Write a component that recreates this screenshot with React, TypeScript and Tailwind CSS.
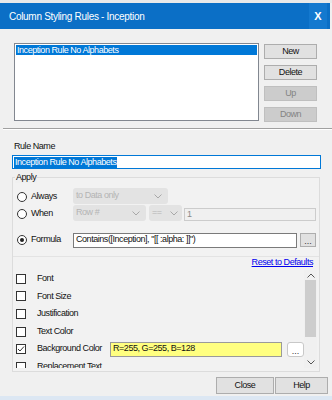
import React from 'react';

const font = { fontFamily: '"Liberation Sans", Arial, sans-serif' };

const Chevron = ({ className = '' }: { className?: string }) => (
  <svg width="8" height="5" viewBox="0 0 8 5" className={className}>
    <path d="M0.5 0.5 L4 4 L7.5 0.5" fill="none" stroke="currentColor" strokeWidth="1" />
  </svg>
);

const Radio = ({ checked = false }: { checked?: boolean }) => (
  <div className="w-[10px] h-[10px] rounded-full border border-[#333] bg-white flex items-center justify-center">
    {checked && <div className="w-[4px] h-[4px] rounded-full bg-[#222]" />}
  </div>
);

const Check = ({ checked = false }: { checked?: boolean }) => (
  <div className="w-[10px] h-[10px] border border-[#333] bg-white flex items-center justify-center">
    {checked && (
      <svg width="8" height="8" viewBox="0 0 8 8">
        <path d="M1 4 L3 6 L7 1.5" fill="none" stroke="#333" strokeWidth="1" />
      </svg>
    )}
  </div>
);

const WinButton = ({ label, disabled = false, className = '' }: { label: string; disabled?: boolean; className?: string }) => (
  <div
    className={`flex items-center justify-center border ${
      disabled ? 'bg-[#cccccc] border-[#bfbfbf] text-[#838383]' : 'bg-[#e1e1e1] border-[#adadad] text-[#111]'
    } ${className}`}
  >
    {label}
  </div>
);

const rows = [
  { label: 'Font' },
  { label: 'Font Size' },
  { label: 'Justification' },
  { label: 'Text Color' },
  { label: 'Background Color', checked: true, value: 'R=255, G=255, B=128' },
  { label: 'Replacement Text' },
];

export default function App() {
  return (
    <div style={font} className="w-[332px] h-[400px] bg-[#f0f0f0] text-[9px] tracking-[-0.45px] text-[#111] overflow-hidden flex flex-col">
      {/* Title bar */}
      <div className="h-[3px] bg-[#e9e9e9] shrink-0" />
      <div className="h-[26px] bg-[#0b6fc6] flex items-center justify-between pl-[9px] pr-[3px] shrink-0 mr-[2px]">
        <span className="text-white text-[10px] tracking-[-0.3px]">Column Styling Rules - Inception</span>
        <div className="w-[18px] h-[26px] bg-[#1479cf] flex items-center justify-center">
          <span className="text-white font-bold text-[11px] tracking-normal">X</span>
        </div>
      </div>

      {/* Rules list + buttons */}
      <div className="flex pl-[14px] pt-[14px] gap-[5px]">
        <div className="w-[245px] h-[78px] bg-white border border-[#828790] p-[1px]">
          <div className="h-[10px] bg-[#0078d7] text-white leading-[10px] pl-[1px]">Inception Rule No Alphabets</div>
        </div>
        <div className="flex flex-col gap-[6px] pt-[1px]">
          <WinButton label="New" className="w-[53px] h-[15px]" />
          <WinButton label="Delete" className="w-[53px] h-[15px]" />
          <WinButton label="Up" disabled className="w-[53px] h-[15px]" />
          <WinButton label="Down" disabled className="w-[53px] h-[15px]" />
        </div>
      </div>

      {/* Separator */}
      <div className="mt-[6px] ml-[3px] h-[1px] bg-[#a0a0a0]" />
      <div className="ml-[3px] h-[1px] bg-white" />

      {/* Rule name */}
      <div className="pl-[14px] pt-[10px] leading-[12px]">Rule Name</div>
      <div className="ml-[12px] mt-[3px] w-[309px] h-[14px] bg-white border border-[#0078d7] flex items-center px-[1px]">
        <span className="bg-[#0078d7] text-white leading-[11px] px-[1px]">Inception Rule No Alphabets</span>
      </div>

      {/* Apply group */}
      <div className="relative ml-[12px] mt-[8px] w-[308px] h-[195px] border border-[#dcdcdc] bg-[#f2f2f2] flex flex-col">
        <div className="absolute -top-[7px] left-[2px] px-[1px] bg-[#f0f0f0] leading-[12px]">Apply</div>

        <div className="flex flex-col pl-[4px] pt-[10px]">
          {/* Always */}
          <div className="flex items-start h-[17px]">
            <div className="w-[56px] flex items-center gap-[4px] pt-[2px]">
              <Radio />
              <span>Always</span>
            </div>
            <div className="w-[95px] h-[16px] rounded-[3px] bg-[#e3e3e3] text-[#b4b4b4] flex items-center justify-between px-[3px]">
              <span>to Data only</span>
              <Chevron className="text-[#a8a8a8] mr-[3px]" />
            </div>
          </div>
          {/* When */}
          <div className="flex items-start h-[17px]">
            <div className="w-[56px] flex items-center gap-[4px] pt-[2px]">
              <Radio />
              <span>When</span>
            </div>
            <div className="w-[73px] h-[16px] rounded-[3px] bg-[#e3e3e3] text-[#b4b4b4] flex items-center justify-between px-[3px]">
              <span>Row #</span>
              <Chevron className="text-[#a8a8a8] mr-[3px]" />
            </div>
            <div className="ml-[3px] w-[33px] h-[16px] rounded-[3px] bg-[#e3e3e3] text-[#b4b4b4] flex items-center justify-between px-[3px]">
              <span>==</span>
              <Chevron className="text-[#a8a8a8] mr-[1px]" />
            </div>
            <div className="ml-[2px] mt-[3px] w-[132px] h-[13px] bg-[#f0f0f0] border border-[#cccccc] text-[#8a8a8a] flex items-center px-[2px]">
              1
            </div>
          </div>
          {/* Formula */}
          <div className="flex items-center h-[16px] mt-[10px]">
            <div className="w-[56px] flex items-center gap-[4px]">
              <Radio checked />
              <span>Formula</span>
            </div>
            <div className="w-[224px] h-[15px] bg-white border border-[#7a7a7a] flex items-center px-[2px] text-[#111]">
              Contains([Inception], "[[ :alpha: ]]")
            </div>
            <div className="ml-[3px] w-[16px] h-[14px] bg-[#e1e1e1] border border-[#adadad] flex items-end justify-center leading-[10px] text-[#333] tracking-normal">
              ...
            </div>
          </div>
        </div>

        <div className="mt-[8px] h-[1px] bg-[#e3e3e3]" />

        <div className="flex justify-end pr-[6px] leading-[10px] h-[10px]">
          <span className="text-[#0000ee] underline">Reset to Defaults</span>
        </div>

        {/* Check list */}
        <div className="flex flex-1 mt-[3px] mb-[3px] overflow-hidden">
          <div className="flex-1 flex flex-col pl-[3px] overflow-hidden">
            {rows.map((r) => (
              <div key={r.label} className="flex items-center h-[17.6px] shrink-0">
                <Check checked={r.checked} />
                <span className="ml-[11px] w-[73px] shrink-0 whitespace-nowrap">{r.label}</span>
                {r.value && (
                  <>
                    <div className="w-[172px] h-[15px] bg-[#ffff80] border border-[#9a9a9a] flex items-center px-[2px]">
                      {r.value}
                    </div>
                    <div className="ml-[5px] w-[17px] h-[15px] bg-white border border-[#c8c8c8] rounded-[3px] flex items-end justify-center leading-[10px] text-[#333] tracking-normal">
                      ...
                    </div>
                  </>
                )}
              </div>
            ))}
          </div>
          <div className="w-[13px] mr-[2px] bg-[#f0f0f0] flex flex-col items-center">
            <div className="h-[10px] flex items-center justify-center">
              <Chevron className="rotate-180 text-[#555]" />
            </div>
            <div className="w-[11px] h-[57px] bg-[#cdcdcd]" />
            <div className="flex-1" />
            <div className="h-[12px] flex items-center justify-center">
              <Chevron className="text-[#555]" />
            </div>
          </div>
        </div>
      </div>

      {/* Footer buttons */}
      <div className="flex justify-end gap-[1px] pr-[4px] pt-[5px]">
        <WinButton label="Close" className="w-[58px] h-[17px]" />
        <WinButton label="Help" className="w-[53px] h-[17px]" />
      </div>
      <div className="flex-1" />
      <div className="h-[4px] bg-[#dce7f3]" />
    </div>
  );
}
